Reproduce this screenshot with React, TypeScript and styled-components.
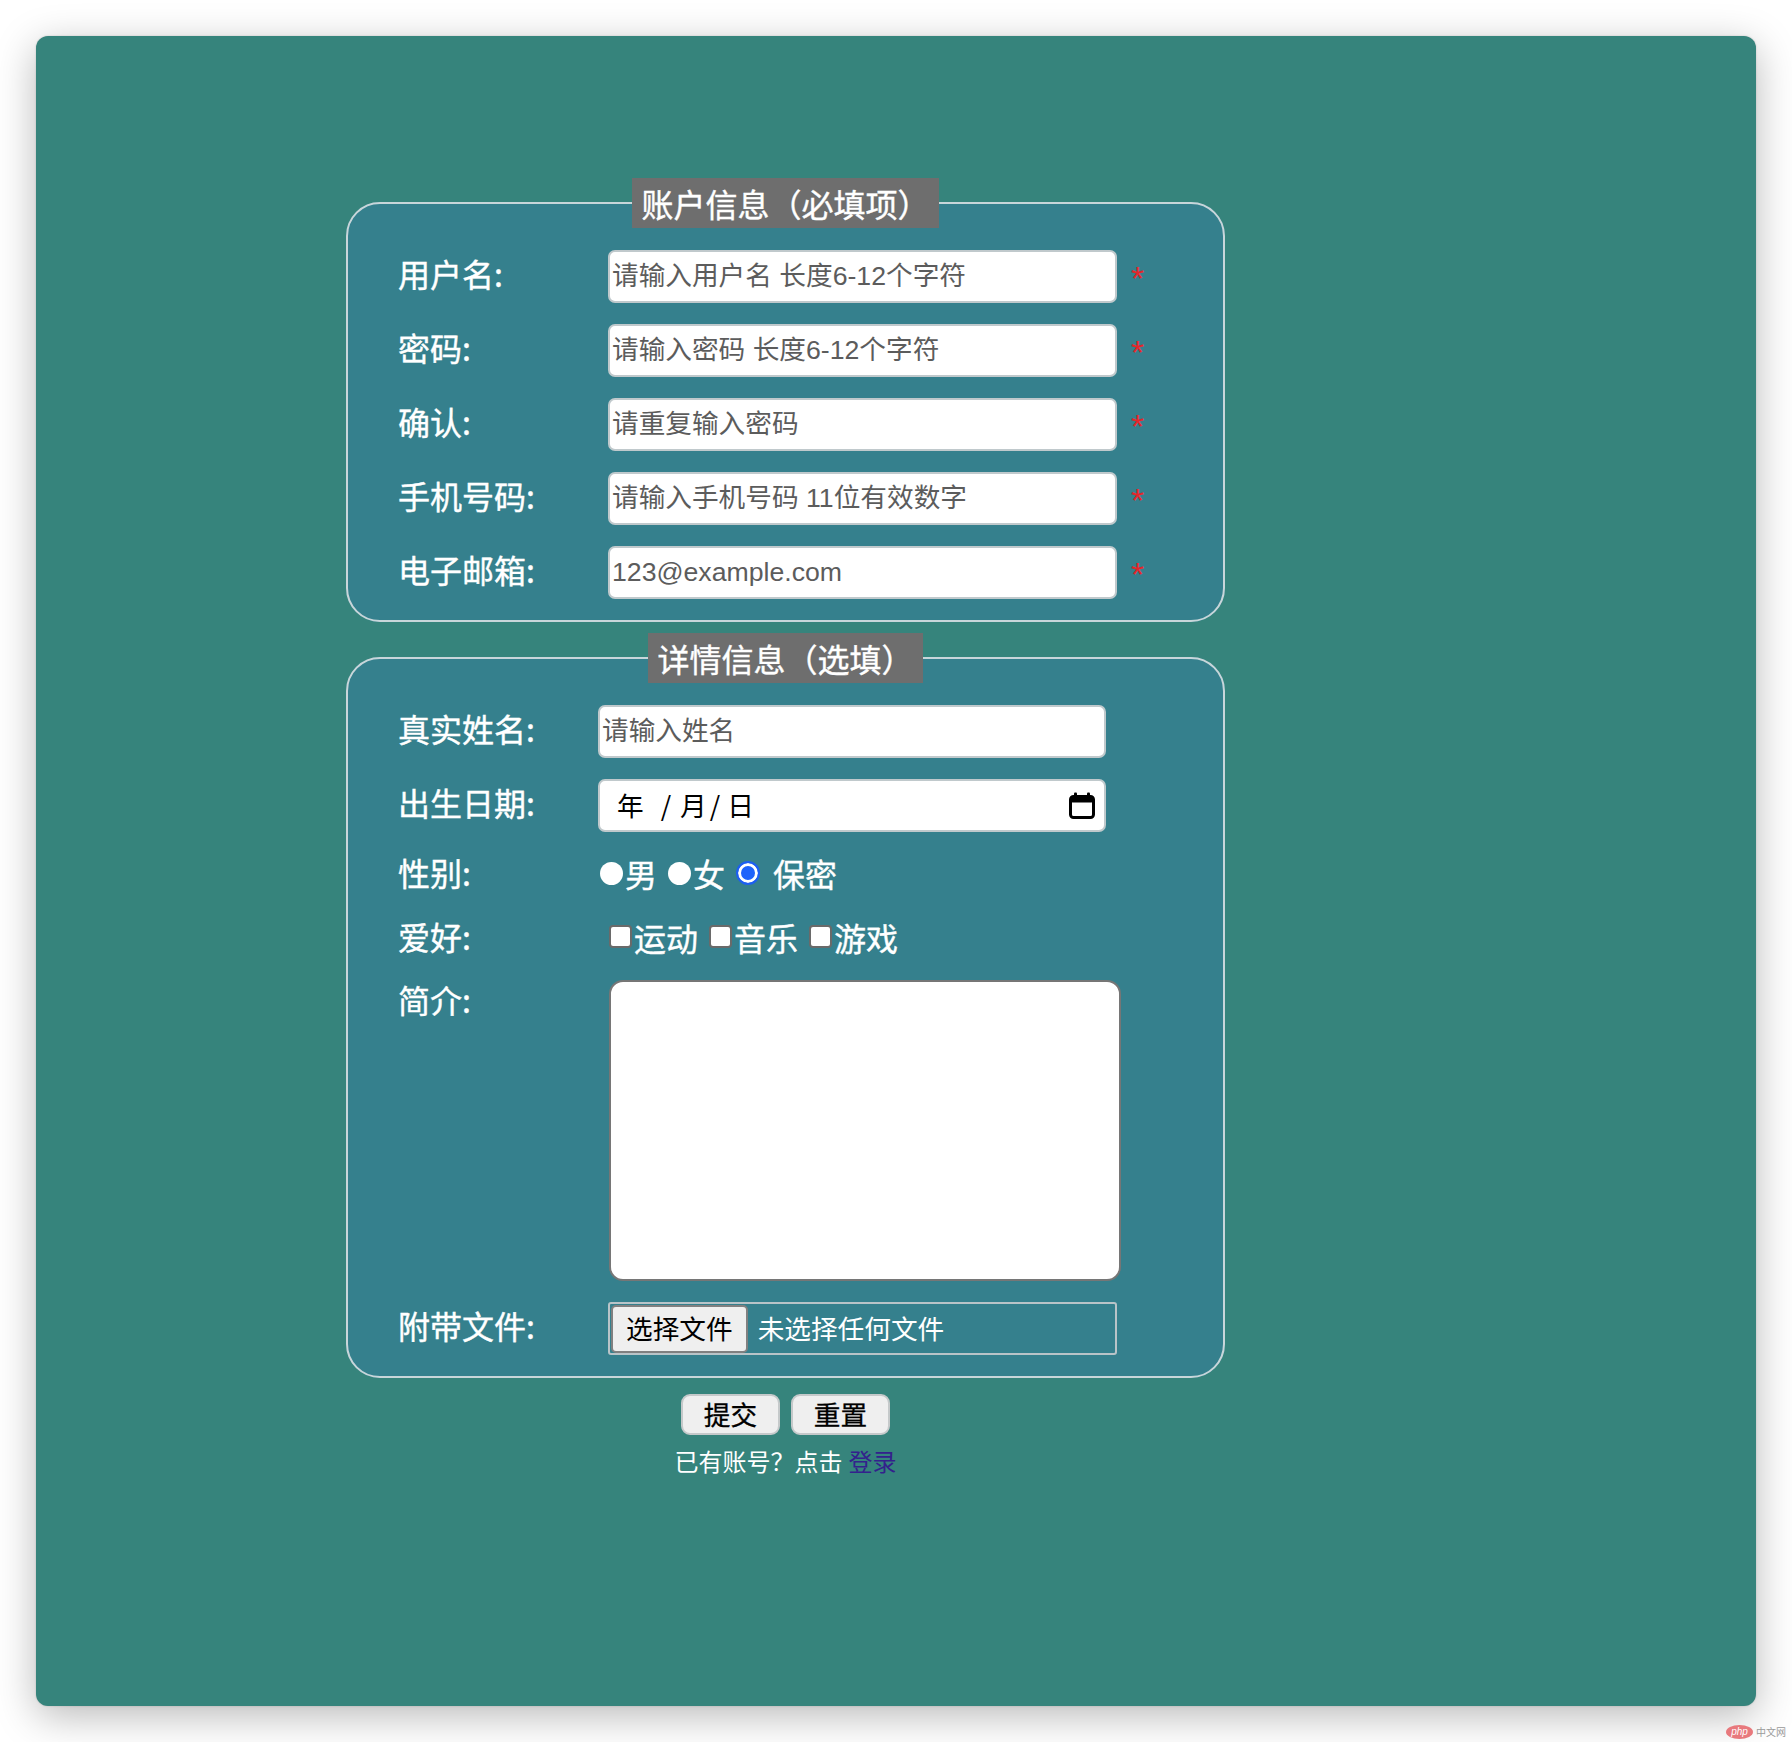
import React from 'react';
import styled, { createGlobalStyle } from 'styled-components';

const GlobalStyle = createGlobalStyle`
  html, body {
    margin: 0;
    padding: 0;
    background: #ffffff;
  }
  body {
    font-family: "Noto Sans CJK SC", "Noto Sans", sans-serif;
  }
  *, *::before, *::after {
    box-sizing: border-box;
  }
`;

const Page = styled.div`
  width: 1792px;
  min-height: 1742px;
  padding-top: 36px;
  display: flex;
  flex-direction: column;
`;

const Window = styled.main`
  margin: 0 36px;
  height: 1670px;
  background: #36847c;
  border-radius: 12px;
  box-shadow: 0 10px 40px rgba(0, 0, 0, 0.28), 0 0 2px rgba(0, 0, 0, 0.18);
  padding: 142px 0 0 310px;
`;

const Form = styled.form`
  width: 879px;
  display: flex;
  flex-direction: column;
`;

const Fieldset = styled.fieldset<{ $mt?: number }>`
  margin: ${p => p.$mt ?? 0}px 0 0;
  min-width: 0;
  padding: 22px 50px 21px;
  border: 2px solid #c8d6da;
  border-radius: 34px;
  background: #35808d;
`;

const Legend = styled.legend`
  margin-left: auto;
  margin-right: auto;
  padding: 0 9px;
  height: 50px;
  line-height: 50px;
  background: #6e6e6e;
  color: #ffffff;
  font-size: 32px;
  white-space: nowrap;
  -webkit-text-stroke: 0.4px #ffffff;
`;

const Rows = styled.div`
  display: flex;
  flex-direction: column;
  gap: 21px;
`;

const Row = styled.div<{ $align?: 'center' | 'flex-start'; $h?: number }>`
  display: flex;
  align-items: ${p => p.$align ?? 'center'};
  ${p => (p.$h ? `height: ${p.$h}px;` : '')}
`;

const Label = styled.label<{ $w: number; $mt?: number; $pb?: number }>`
  flex: 0 0 ${p => p.$w}px;
  margin-top: ${p => p.$mt ?? 0}px;
  padding-bottom: ${p => p.$pb ?? 8}px;
  font-size: 32px;
  line-height: 44px;
  color: #ffffff;
  white-space: nowrap;
  -webkit-text-stroke: 0.4px #ffffff;
`;

const TextInput = styled.input<{ $w: number }>`
  width: ${p => p.$w}px;
  height: 53px;
  margin: 0;
  padding: 0 2px;
  border: 2px solid #c0c9cc;
  border-radius: 7px;
  background: #ffffff;
  color: #222;
  font-family: "Liberation Sans", "Noto Sans CJK SC", sans-serif;
  font-size: 26.67px;
  outline: none;
  &::placeholder {
    color: #5c5c5c;
  }
`;

const Star = styled.span`
  margin-left: 14px;
  padding-top: 3px;
  color: #e3262b;
  font-family: "Liberation Sans", sans-serif;
  font-size: 34px;
  line-height: 1;
`;

const DateBox = styled.div`
  width: 508px;
  height: 53px;
  border: 2px solid #c0c9cc;
  border-radius: 7px;
  background: #ffffff;
  display: flex;
  align-items: center;
  padding: 0 9px 0 17px;
  color: #000;
  font-size: 26.67px;
`;

const DateSeg = styled.span<{ $ml?: number }>`
  margin-left: ${p => p.$ml ?? 0}px;
  line-height: 1;
`;

const CalendarIcon = styled.svg`
  margin-left: auto;
  flex: 0 0 auto;
`;

const ChoiceGroup = styled.div<{ $pl: number }>`
  display: flex;
  align-items: center;
  gap: 11px;
  padding-left: ${p => p.$pl}px;
  padding-bottom: 2px;
`;

const ChoiceItem = styled.label<{ $gap?: number }>`
  display: flex;
  align-items: center;
  gap: ${p => p.$gap ?? 2}px;
  font-size: 32px;
  line-height: 44px;
  color: #ffffff;
  -webkit-text-stroke: 0.4px #ffffff;
`;

const Radio = styled.input.attrs({ type: 'radio' })`
  appearance: none;
  width: 23px;
  height: 23px;
  margin: 0;
  border-radius: 50%;
  background: #ffffff;
  &:checked {
    width: 24px;
    height: 24px;
    border: 2px solid #1d5ff0;
    background: #1f63fb;
    box-shadow: inset 0 0 0 3px #ffffff;
  }
`;

const Checkbox = styled.input.attrs({ type: 'checkbox' })`
  appearance: none;
  width: 23px;
  height: 23px;
  margin: 0;
  border: 2px solid #6a6a6a;
  border-radius: 4px;
  background: #ffffff;
`;

const TextArea = styled.textarea`
  width: 512px;
  height: 301px;
  margin: 0;
  border: 2px solid #767676;
  border-radius: 14px;
  background: #ffffff;
  resize: none;
  outline: none;
  font-size: 26.67px;
`;

const FileBox = styled.div`
  width: 509px;
  height: 53px;
  border: 2px solid #b9c4c8;
  border-radius: 3px;
  display: flex;
  align-items: center;
  gap: 10px;
  padding: 0 1px;
`;

const FileButton = styled.button`
  height: 48px;
  padding: 0 13px;
  background: #efefef;
  border: 2px solid #808080;
  border-radius: 5px;
  color: #000;
  font-family: "Noto Sans CJK SC", sans-serif;
  font-size: 26.67px;
  line-height: 1;
`;

const FileStatus = styled.span`
  color: #ffffff;
  font-size: 26.67px;
  line-height: 1;
`;

const ActionRow = styled.div`
  display: flex;
  justify-content: center;
  gap: 11px;
  margin-top: 16px;
`;

const ActionButton = styled.button`
  width: 99px;
  height: 41px;
  padding: 0;
  background: #efefef;
  border: 2px solid #c5c9ca;
  border-radius: 9px;
  color: #000;
  font-family: "Noto Sans CJK SC", sans-serif;
  font-size: 26.67px;
  line-height: 1;
  -webkit-text-stroke: 0.3px #000;
`;

const Hint = styled.p`
  margin: 8px 0 0;
  text-align: center;
  font-size: 24px;
  line-height: 36px;
  color: #ffffff;
`;

const LoginLink = styled.a`
  margin-left: 6px;
  color: #33218c;
  text-decoration: none;
`;

const Footer = styled.div`
  display: flex;
  justify-content: flex-end;
  align-items: center;
  gap: 3px;
  padding: 19px 6px 0 0;
`;

const PhpBadge = styled.span`
  width: 27px;
  height: 14px;
  border-radius: 50%;
  background: #e8797d;
  color: #ffffff;
  font-family: "Liberation Sans", sans-serif;
  font-style: italic;
  font-size: 10px;
  line-height: 14px;
  text-align: center;
`;

const SiteName = styled.span`
  color: #9a9a9a;
  font-size: 10px;
  line-height: 14px;
`;

const accountFields = [
  { label: '用户名:', placeholder: '请输入用户名 长度6-12个字符', type: 'text' },
  { label: '密码:', placeholder: '请输入密码 长度6-12个字符', type: 'password' },
  { label: '确认:', placeholder: '请重复输入密码', type: 'password' },
  { label: '手机号码:', placeholder: '请输入手机号码 11位有效数字', type: 'tel' },
  { label: '电子邮箱:', placeholder: '123@example.com', type: 'email' },
];

export default function App() {
  return (
    <>
      <GlobalStyle />
      <Page>
        <Window>
          <Form onSubmit={e => e.preventDefault()}>
            <Fieldset>
              <Legend>账户信息（必填项）</Legend>
              <Rows>
                {accountFields.map(f => (
                  <Row key={f.label}>
                    <Label $w={210}>{f.label}</Label>
                    <TextInput $w={509} type={f.type} placeholder={f.placeholder} />
                    <Star>*</Star>
                  </Row>
                ))}
              </Rows>
            </Fieldset>

            <Fieldset $mt={11}>
              <Legend>详情信息（选填）</Legend>
              <Rows>
                <Row>
                  <Label $w={200}>真实姓名:</Label>
                  <TextInput $w={508} type="text" placeholder="请输入姓名" />
                </Row>
                <Row>
                  <Label $w={200}>出生日期:</Label>
                  <DateBox>
                    <DateSeg>年</DateSeg>
                    <DateSeg $ml={17}>/</DateSeg>
                    <DateSeg $ml={9}>月</DateSeg>
                    <DateSeg $ml={3}>/</DateSeg>
                    <DateSeg $ml={7}>日</DateSeg>
                    <CalendarIcon width="26" height="27" viewBox="0 0 26 27">
                      <rect x="1.5" y="4.5" width="23" height="21" rx="3" fill="none" stroke="#000" strokeWidth="3" />
                      <rect x="1.5" y="4.5" width="23" height="6" rx="2" fill="#000" />
                      <rect x="5" y="0.5" width="3" height="6" rx="1" fill="#000" />
                      <rect x="18" y="0.5" width="3" height="6" rx="1" fill="#000" />
                    </CalendarIcon>
                  </DateBox>
                </Row>
                <Row $h={42}>
                  <Label $w={200} $pb={4}>性别:</Label>
                  <ChoiceGroup $pl={2}>
                    <ChoiceItem>
                      <Radio name="sex" value="m" />男
                    </ChoiceItem>
                    <ChoiceItem>
                      <Radio name="sex" value="f" />女
                    </ChoiceItem>
                    <ChoiceItem $gap={13}>
                      <Radio name="sex" value="s" defaultChecked />保密
                    </ChoiceItem>
                  </ChoiceGroup>
                </Row>
                <Row $h={43}>
                  <Label $w={200} $pb={4}>爱好:</Label>
                  <ChoiceGroup $pl={11}>
                    <ChoiceItem>
                      <Checkbox name="hobby" value="sport" />运动
                    </ChoiceItem>
                    <ChoiceItem>
                      <Checkbox name="hobby" value="music" />音乐
                    </ChoiceItem>
                    <ChoiceItem>
                      <Checkbox name="hobby" value="game" />游戏
                    </ChoiceItem>
                  </ChoiceGroup>
                </Row>
                <Row $align="flex-start">
                  <Label $w={211} $mt={-3}>简介:</Label>
                  <TextArea />
                </Row>
                <Row>
                  <Label $w={210}>附带文件:</Label>
                  <FileBox>
                    <FileButton type="button">选择文件</FileButton>
                    <FileStatus>未选择任何文件</FileStatus>
                  </FileBox>
                </Row>
              </Rows>
            </Fieldset>

            <ActionRow>
              <ActionButton type="submit">提交</ActionButton>
              <ActionButton type="reset">重置</ActionButton>
            </ActionRow>
            <Hint>
              已有账号？点击<LoginLink href="#">登录</LoginLink>
            </Hint>
          </Form>
        </Window>
        <Footer>
          <PhpBadge>php</PhpBadge>
          <SiteName>中文网</SiteName>
        </Footer>
      </Page>
    </>
  );
}
